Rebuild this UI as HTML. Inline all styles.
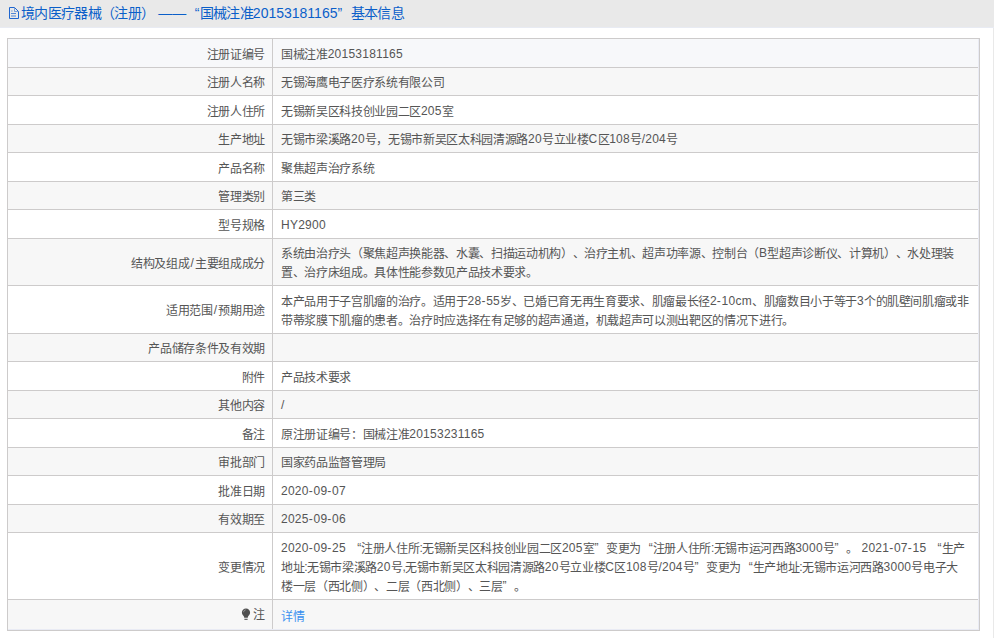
<!DOCTYPE html>
<html lang="zh-CN">
<head>
<meta charset="utf-8">
<style>
html,body{margin:0;padding:0;}
body{width:994px;height:638px;overflow:hidden;background:#e9e9e9;position:relative;font-family:"Liberation Sans",sans-serif;text-spacing-trim:space-all;}
.hd{position:absolute;left:0;top:0;width:994px;height:27px;background:#e9e9e9;border-bottom:1px solid #e8ebf3;}
.hd .ic{position:absolute;left:8px;top:6px;}
.hd .t{position:absolute;left:21px;top:0;line-height:27px;font-size:14px;letter-spacing:-0.67px;color:#0b5fc9;white-space:nowrap;}
.hd .t .n{letter-spacing:0;}
.pn{position:absolute;left:0;top:28px;width:993px;height:610px;background:#fff;}
table{position:absolute;left:7px;top:38px;width:973px;border-collapse:collapse;table-layout:fixed;}
td{border:1px solid #cdcbcb;padding:4px 0 0 0;font-size:12px;letter-spacing:-0.34px;line-height:19px;white-space:nowrap;overflow:hidden;}
td .n{letter-spacing:0.25px;font-size:12px;position:relative;top:-1px;}
td.l{text-align:right;color:#555;padding-right:7px;}
td.v{color:#555;padding-left:8px;}
tr.o td{background:#fff;}
tr.e td{background:#f7f7f7;}
tr.f td{background:#f7f8fa;}
td .p{letter-spacing:-0.8px;}
td .h{letter-spacing:0.75px;}
td.l .n{padding:0 1px;}
td .ql,td .qr{display:inline-block;width:11.66px;letter-spacing:0;font-size:12px;position:relative;top:-1px;}
td .ql{text-align:right;} td .qr{text-align:left;}
.hd .ql,.hd .qr{display:inline-block;width:13.33px;letter-spacing:0;}
.hd .ql{text-align:right;} .hd .qr{text-align:left;}
a{color:#3a90f0;text-decoration:none;}
.bulb{vertical-align:-2px;margin-right:2px;}
tr.lr td{padding-top:4px;} tr.lr td.l{padding-top:1px;}
</style>
</head>
<body>
<div class="hd">
<svg class="ic" width="12" height="14" viewBox="0 0 12 14"><path d="M1.5 1.5H6.5L10.5 5.5V12.5H1.5Z" fill="none" stroke="#1f66cf" stroke-width="1"/><path d="M6.5 2V5.5H10" fill="none" stroke="#1f66cf" stroke-width="0.8" opacity="0.7"/><path d="M3.3 5H4.5M3 7.5H8M3 10H8" stroke="#1f66cf" stroke-width="1" opacity="0.75"/></svg>
<div class="t">境内医疗器械（注册）<span class="n"> ——</span><span class="ql">“</span>国械注准<span class="n">20153181165</span><span class="qr">”</span>基本信息</div>
</div>
<div class="pn"></div>
<table>
<colgroup><col style="width:265px"><col></colgroup>
<tr class="f" style="height:29px"><td class="l">注册证编号</td><td class="v">国械注准<span class="n">20153181165</span></td></tr>
<tr class="e" style="height:28px"><td class="l">注册人名称</td><td class="v">无锡海鹰电子医疗系统有限公司</td></tr>
<tr class="o" style="height:29px"><td class="l">注册人住所</td><td class="v">无锡新吴区科技创业园二区<span class="n">205</span>室</td></tr>
<tr class="e" style="height:28px"><td class="l">生产地址</td><td class="v">无锡市梁溪路<span class="n">20</span>号，无锡市新吴区太科园清源路<span class="n">20</span>号立业楼<span class="n">C</span>区<span class="n">108</span>号<span class="n">/204</span>号</td></tr>
<tr class="o" style="height:29px"><td class="l">产品名称</td><td class="v">聚焦超声治疗系统</td></tr>
<tr class="e" style="height:28px"><td class="l">管理类别</td><td class="v">第三类</td></tr>
<tr class="o" style="height:29px"><td class="l">型号规格</td><td class="v"><span class="n">HY2900</span></td></tr>
<tr class="e" style="height:47px"><td class="l">结构及组成<span class="n">/</span>主要组成成分</td><td class="v">系统由治疗头（聚焦超声换能器、水囊、扫描运动机构）、治疗主机、超声功率源、控制台（<span class="n">B</span>型超声诊断仪、计算机）、水处理装<br>置、治疗床组成。具体性能参数见产品技术要求。</td></tr>
<tr class="o" style="height:48px"><td class="l">适用范围<span class="n">/</span>预期用途</td><td class="v">本产品用于子宫肌瘤的治疗。适用于<span class="n">28<span class="h">-</span>55</span>岁、已婚已育无再生育要求、肌瘤最长径<span class="n">2<span class="h">-</span>10cm</span>、肌瘤数目小于等于<span class="n">3</span>个的肌壁间肌瘤或非<br>带蒂浆膜下肌瘤的患者。治疗时应选择在有足够的超声通道，机载超声可以测出靶区的情况下进行。</td></tr>
<tr class="e" style="height:28px"><td class="l">产品储存条件及有效期</td><td class="v"></td></tr>
<tr class="o" style="height:29px"><td class="l">附件</td><td class="v">产品技术要求</td></tr>
<tr class="e" style="height:28px"><td class="l">其他内容</td><td class="v"><span class="n">/</span></td></tr>
<tr class="o" style="height:29px"><td class="l">备注</td><td class="v">原注册证编号：国械注准<span class="n">20153231165</span></td></tr>
<tr class="e" style="height:28px"><td class="l">审批部门</td><td class="v">国家药品监督管理局</td></tr>
<tr class="o" style="height:29px"><td class="l">批准日期</td><td class="v"><span class="n">2020<span class="h">-</span>09<span class="h">-</span>07</span></td></tr>
<tr class="e" style="height:28px"><td class="l">有效期至</td><td class="v"><span class="n">2025<span class="h">-</span>09<span class="h">-</span>06</span></td></tr>
<tr class="o" style="height:67px"><td class="l">变更情况</td><td class="v"><span class="n">2020<span class="h">-</span>09<span class="h">-</span>25 </span><span class="ql">“</span>注册人住所<span class="n"><span class="p">:</span></span>无锡新吴区科技创业园二区<span class="n">205</span>室<span class="qr">”</span>变更为<span class="ql">“</span>注册人住所<span class="n"><span class="p">:</span></span>无锡市运河西路<span class="n">3000</span>号<span class="qr">”</span>。<span class="n"> 2021<span class="h">-</span>07<span class="h">-</span>15 </span><span class="ql">“</span>生产<br>地址<span class="n"><span class="p">:</span></span>无锡市梁溪路<span class="n">20</span>号<span class="n"><span class="p">,</span></span>无锡市新吴区太科园清源路<span class="n">20</span>号立业楼<span class="n">C</span>区<span class="n">108</span>号<span class="n">/204</span>号<span class="qr">”</span>变更为<span class="ql">“</span>生产地址<span class="n"><span class="p">:</span></span>无锡市运河西路<span class="n">3000</span>号电子大<br>楼一层（西北侧）、二层（西北侧）、三层<span class="qr">”</span>。</td></tr>
<tr class="e lr" style="height:31px"><td class="l"><svg class="bulb" width="10" height="13" viewBox="0 0 10 13"><path d="M5 0.6C2.6 0.6 0.9 2.3 0.9 4.6c0 1.6 0.9 2.6 1.7 3.5 0.4 0.5 0.6 1 0.6 1.6h3.6c0-0.6 0.2-1.1 0.6-1.6 0.8-0.9 1.7-1.9 1.7-3.5C9.1 2.3 7.4 0.6 5 0.6z" fill="#505050"/><path d="M2.6 4.2C2.7 3 3.5 2.1 4.6 1.9" fill="none" stroke="#b0b0b0" stroke-width="0.8"/><path d="M3.4 11.3h3.2" stroke="#505050" stroke-width="1.1"/></svg>注</td><td class="v"><a>详情</a></td></tr>
</table>
<div style="position:absolute;left:978px;top:39px;width:1px;height:591px;background:#e9ebf4;"></div>
<div style="position:absolute;left:8px;top:629px;width:971px;height:1px;background:#e9ebf4;"></div>
</body>
</html>
